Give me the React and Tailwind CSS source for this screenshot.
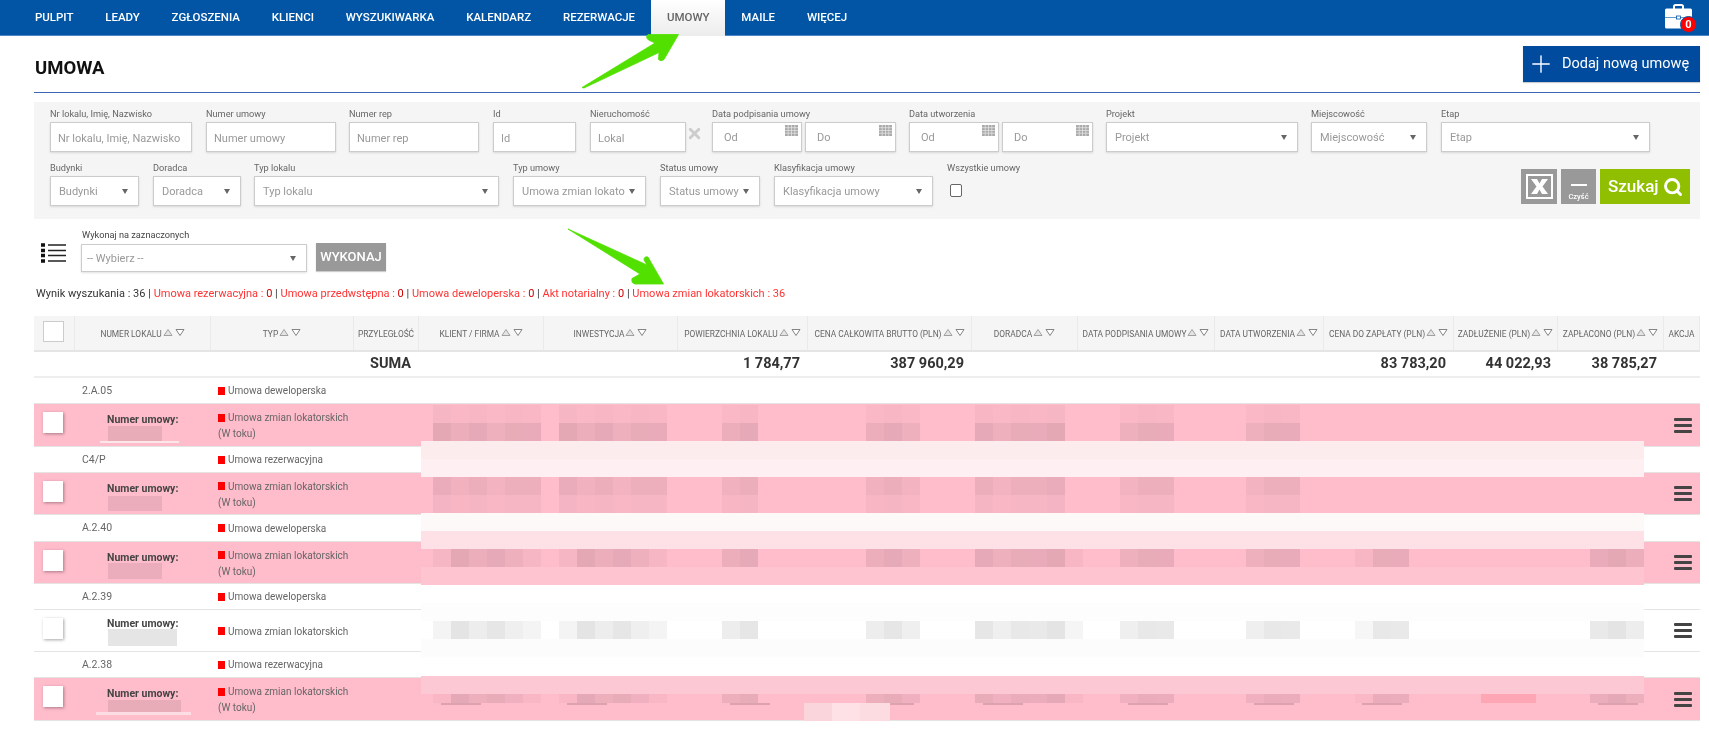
import React from "react";
import { Search, Plus, X } from "lucide-react";

const NAV = ["PULPIT", "LEADY", "ZGŁOSZENIA", "KLIENCI", "WYSZUKIWARKA", "KALENDARZ", "REZERWACJE", "UMOWY", "MAILE", "WIĘCEJ"];
const GRID = "grid grid-cols-[41px_136px_143px_65px_125px_134px_130px_164px_106px_137px_109px_130px_104px_106px_36px]";

function Label({ children }) {
  return <div className="h-[14px] text-[9.2px] leading-[12px] text-[#666] whitespace-nowrap">{children}</div>;
}
const box = "h-[30px] border border-[#ccc] bg-white shadow-[0_1px_2px_rgba(0,0,0,0.12)] text-[11px] text-[#999]";

function TextField({ label, w, cls = "" }) {
  return (
    <div className={w + " shrink-0 " + cls}>
      <Label>{label}</Label>
      <input placeholder={label} className={box + " w-full px-[7px] pt-[2px] outline-none placeholder:text-[#999]"} />
    </div>
  );
}
function Sel({ text, cls = "" }) {
  return (
    <div className={box + " flex items-center pl-[8px] pr-[10px] " + cls}>
      <span className="flex-1 pt-[2px] whitespace-nowrap">{text}</span>
      <span className="ml-[2px] shrink-0 w-0 h-0 border-x-[3.5px] border-x-transparent border-t-[5px] border-t-[#666]" />
    </div>
  );
}
function SelField({ label, text, w, cls = "" }) {
  return (
    <div className={w + " shrink-0 " + cls}>
      <Label>{label}</Label>
      <Sel text={text ?? label} />
    </div>
  );
}
function Cal() {
  return (
    <svg width="13" height="11" viewBox="0 0 13 11" className="absolute right-[3px] top-[2px]">
      <rect width="13" height="11" fill="#aaa" />
      <path d="M3.2 0v11M6.5 0v11M9.8 0v11M0 2.7h13M0 5.5h13M0 8.2h13" stroke="#e8e8e8" strokeWidth="0.7" />
    </svg>
  );
}
function DateBox({ text, w }) {
  return (
    <div className={box + " relative flex items-center pl-[11px] pt-[2px] bg-[#fafafa] " + w}>
      {text}
      <Cal />
    </div>
  );
}
function DateField({ label, cls = "" }) {
  return (
    <div className={"shrink-0 " + cls}>
      <Label>{label}</Label>
      <div className="flex gap-[3px]">
        <DateBox text="Od" w="w-[90px]" />
        <DateBox text="Do" w="w-[91px]" />
      </div>
    </div>
  );
}

function Sort() {
  return (
    <svg width="22" height="9" viewBox="0 0 22 9" className="shrink-0 -mt-[4px] ml-[1px]">
      <path d="M1 7.5 5 1.5 9 7.5Z" fill="#e4e4e4" stroke="#999" strokeWidth="0.9" />
      <path d="M13 1.5h8L17 7.5Z" fill="#fff" stroke="#777" strokeWidth="0.9" />
    </svg>
  );
}
const HEAD = [
  ["NUMER LOKALU", 1], ["TYP", 1], ["PRZYLEGŁOŚĆ", 0], ["KLIENT / FIRMA", 1], ["INWESTYCJA", 1], ["POWIERZCHNIA LOKALU", 1],
  ["CENA CAŁKOWITA BRUTTO (PLN)", 1], ["DORADCA", 1], ["DATA PODPISANIA UMOWY", 1], ["DATA UTWORZENIA", 1],
  ["CENA DO ZAPŁATY (PLN)", 1], ["ZADŁUŻENIE (PLN)", 1], ["ZAPŁACONO (PLN)", 1], ["AKCJA", 0],
];

function Check({ cls = "" }) {
  return <div className={"w-[20px] h-[21px] bg-white shadow-[1px_1px_3px_rgba(0,0,0,0.35)] " + cls} />;
}
function TypeLine({ children }) {
  return (
    <div className="flex items-center text-[10px] leading-[15px] text-[#666] whitespace-nowrap">
      <span className="w-[7px] h-[8px] bg-[#f00] mr-[3px]" />
      {children}
    </div>
  );
}
function ShortRow({ nr, type, h = "h-[26px]" }) {
  return (
    <div className={GRID + " items-center border-b border-[#e4e4e4] bg-white " + h}>
      <div />
      <div className="pl-[7px] text-[10.5px] text-[#666]">{nr}</div>
      <div className="pl-[7px]"><TypeLine>{type}</TypeLine></div>
    </div>
  );
}
function Burger() {
  return (
    <div className="ml-[10px] w-[18px] flex flex-col gap-[3px]">
      <span className="h-[3px] rounded-[1px] bg-[#444]" />
      <span className="h-[3px] rounded-[1px] bg-[#444]" />
      <span className="h-[3px] rounded-[1px] bg-[#444]" />
    </div>
  );
}
function LongRow({ pink = true, h = "h-[42px]", status = true }) {
  return (
    <div className={GRID + " items-center border-b border-[#e4e4e4] relative " + h + " " + (pink ? "bg-[#ffbccb]" : "bg-white")}>
      <div className="pl-[9px] pb-[5px]"><Check /></div>
      <div className={"pl-[32px] text-[10.5px] font-bold text-[#444] whitespace-nowrap self-start " + (status ? "pt-[8px]" : "pt-[6px]")}>Numer umowy:</div>
      <div className="pl-[7px] pt-[1px] flex flex-col gap-[1px]">
        <TypeLine>Umowa zmian lokatorskich</TypeLine>
        {status && <div className="text-[10px] leading-[15px] text-[#666]">(W toku)</div>}
      </div>
      <div className="col-start-15"><Burger /></div>
    </div>
  );
}

const XS = [433, 559, 722, 866, 975, 1120, 1246, 1354, 1590];
const SHORT = [[433, 6], [559, 6], [722, 2], [866, 3], [975, 5], [1120, 3], [1246, 3]];
const DARK = [[451, 4], [577, 4], [722, 2], [866, 3], [975, 5], [1120, 3], [1246, 3], [1373, 2], [1590, 3]];
const FAINT = [[433, 1], [523, 1], [559, 1], [649, 1], [1065, 1], [1355, 1]];
const CELLS = [
  { y: 405, h: 18, a: 0.025, xs: SHORT },
  { y: 423, h: 18, a: 0.085, xs: SHORT },
  { y: 477, h: 18, a: 0.065, xs: SHORT },
  { y: 495, h: 18, a: 0.03, xs: SHORT },
  { y: 549, h: 18, a: 0.085, xs: DARK },
  { y: 549, h: 18, a: 0.025, xs: FAINT },
  { y: 621, h: 18, a: 0.085, xs: DARK },
  { y: 621, h: 18, a: 0.035, xs: FAINT },
  { y: 694, h: 9, a: 0.08, xs: DARK },
  { y: 694, h: 9, a: 0.02, xs: FAINT },
];
const SHADE = [1, 1.25, 0.85, 1.15, 0.75, 1.05];
const BANDS = [
  [441, 18, "#fcecee"], [459, 18, "#fdeff2"], [513, 18, "#fdf9f8"], [531, 18, "#fee1e6"], [567, 18, "#fec4d0"],
  [585, 18, "#ffffff"], [603, 18, "#fdfdfd"], [621, 18, "#ffffff"], [639, 18, "#fcfcfc"], [657, 19, "#ffffff"], [676, 18, "#fcc8d3"],
];
const LEFT = [
  [108, 426, 54, 15, 0.09], [108, 496, 54, 15, 0.08], [108, 563, 54, 16, 0.08], [108, 629, 69, 17, 0.1], [108, 700, 73, 12, 0.09],
];

function Overlay() {
  return (
    <div className="absolute inset-0 pointer-events-none">
      {BANDS.map(([y, h, c]) => (
        <div key={y} className="absolute left-[421px] w-[1223px]" style={{ top: y, height: h, background: c }} />
      ))}
      {CELLS.flatMap((r) =>
        r.xs.flatMap(([x, n]) =>
          Array.from({ length: n }, (_, i) => (
            <div
              key={r.y + "-" + x + "-" + i + "-" + r.a}
              className="absolute w-[18px]"
              style={{ left: x + i * 18, top: r.y, height: r.h, background: `rgba(0,0,0,${r.a * SHADE[(x + i) % 6]})` }}
            />
          ))
        )
      )}
      <div className="absolute left-[1481px] top-[694px] w-[55px] h-[9px] bg-[#ffa6b4]" />
      {XS.map((x) => (
        <div key={x} className="absolute top-[703px] h-[2px] w-[40px] bg-[#8a6a72]/30" style={{ left: x + 8 }} />
      ))}
      {LEFT.map(([x, y, w, h, a]) => (
        <div key={y} className="absolute" style={{ left: x, top: y, width: w, height: h, background: `rgba(0,0,0,${a})` }} />
      ))}
      <div className="absolute left-[100px] top-[441px] w-[79px] h-[2px] bg-[#fbe6ea]" />
      <div className="absolute left-[96px] top-[712px] w-[95px] h-[3px] bg-[#fbdde3]" />
      <div className="absolute left-[804px] top-[703px] w-[28px] h-[18px] bg-[#fbd5dc]" />
      <div className="absolute left-[832px] top-[703px] w-[28px] h-[18px] bg-[#fde1e6]" />
      <div className="absolute left-[860px] top-[703px] w-[30px] h-[18px] bg-[#fcdbe1]" />
      <svg className="absolute left-0 top-0" width="1709" height="729">
        <path d="M582 87.5 655 43 648.5 40Q645 37 648 34.5L678.5 34.5 664 59.5Q661 62 658.5 59.5L659 52.5 584 88Z" fill="#52e000" stroke="#52e000" strokeWidth="0.8" strokeLinejoin="round" />
        <path d="M568 229 647 265 644 260Q644 256 648 257L663.5 284 635 284Q631 283 632 278.5L640 274Z" fill="#52e000" stroke="#52e000" strokeWidth="0.8" strokeLinejoin="round" />
      </svg>
    </div>
  );
}

export default function App() {
  return (
    <div className="relative w-[1709px] h-[729px] overflow-hidden bg-white [font-family:Roboto,sans-serif] blur-[0.4px]">
      {/* nav */}
      <nav className="relative h-[36px] bg-[#0255a5] border-b border-[#4f86c6] flex items-stretch pl-[19px]">
        {NAV.map((n) => (
          <a
            key={n}
            className={
              "px-[15.9px] flex items-center text-[11.5px] font-medium " +
              (n === "UMOWY" ? "bg-gradient-to-b from-white to-[#ececec] text-[#666] h-[36px]" : "text-white")
            }
          >
            {n}
          </a>
        ))}
        <div className="absolute right-[17px] top-[4px] w-[27px] h-[25px]">
          <svg width="27" height="25" viewBox="0 0 27 25">
            <path d="M9 5V2.5Q9 1 10.5 1h6Q18 1 18 2.5V5" fill="none" stroke="#fff" strokeWidth="2" />
            <rect x="0" y="4.5" width="27" height="20" rx="1.5" fill="#fff" />
            <path d="M0 13.5h27" stroke="#0255a5" strokeWidth="0.6" />
            <rect x="11.5" y="12" width="4" height="3" fill="#fff" stroke="#0255a5" strokeWidth="0.8" />
          </svg>
          <span className="absolute left-[15px] top-[12px] w-[17px] h-[17px] rounded-full bg-[#f00] border border-[#0255a5] text-white text-[11px] font-bold flex items-center justify-center leading-none">0</span>
        </div>
      </nav>

      <div className="ml-[34px] mr-[9px]">
        {/* title */}
        <div className="h-[57px] border-b-[1.5px] border-[#3a66b5] flex items-start justify-between">
          <h1 className="mt-[21px] ml-[1px] text-[18.5px] leading-[22px] font-bold text-[#111]">UMOWA</h1>
          <button className="mt-[10px] h-[36px] w-[177px] bg-[#004b9e] text-white flex items-center shadow-[0_1px_1px_rgba(0,0,0,0.2)]">
            <Plus size={28} strokeWidth={1.2} className="ml-[4px]" />
            <span className="ml-[7px] text-[14.5px]">Dodaj nową umowę</span>
          </button>
        </div>

        {/* filters */}
        <div className="mt-[9px] h-[117px] bg-[#f5f5f5] pl-[16px] pt-[6px]">
          <div className="flex h-[45px]">
            <TextField label="Nr lokalu, Imię, Nazwisko" w="w-[142px]" />
            <TextField label="Numer umowy" w="w-[130px]" cls="ml-[14px]" />
            <TextField label="Numer rep" w="w-[130px]" cls="ml-[13px]" />
            <TextField label="Id" w="w-[83px]" cls="ml-[14px]" />
            <div className="w-[96px] shrink-0 ml-[14px]">
              <Label>Nieruchomość</Label>
              <input placeholder="Lokal" className={box + " w-full px-[7px] pt-[2px] outline-none placeholder:text-[#999]"} />
            </div>
            <div className="w-[26px] shrink-0 pt-[17px]">
              <X size={17} strokeWidth={4} className="text-[#ccc]" />
            </div>
            <DateField label="Data podpisania umowy" />
            <DateField label="Data utworzenia" cls="ml-[13px]" />
            <SelField label="Projekt" w="w-[192px]" cls="ml-[13px]" />
            <SelField label="Miejscowość" w="w-[116px]" cls="ml-[13px]" />
            <SelField label="Etap" w="w-[209px]" cls="ml-[14px]" />
          </div>
          <div className="flex mt-[9px]">
            <SelField label="Budynki" w="w-[89px]" />
            <SelField label="Doradca" w="w-[88px]" cls="ml-[14px]" />
            <SelField label="Typ lokalu" w="w-[245px]" cls="ml-[13px]" />
            <SelField label="Typ umowy" text="Umowa zmian lokato" w="w-[133px]" cls="ml-[14px]" />
            <SelField label="Status umowy" w="w-[100px]" cls="ml-[14px]" />
            <SelField label="Klasyfikacja umowy" w="w-[159px]" cls="ml-[14px]" />
            <div className="ml-[14px] shrink-0">
              <Label>Wszystkie umowy</Label>
              <div className="ml-[3px] mt-[8px] w-[12px] h-[13px] rounded-[2px] border border-[#666] bg-white" />
            </div>
            <div className="ml-auto mr-[10px] mt-[7px] flex gap-[4px] h-[35px]">
              <button className="w-[36px] bg-[#999] flex items-center justify-center">
                <svg width="27" height="25" viewBox="0 0 27 25">
                  <rect x="1" y="1" width="25" height="23" fill="none" stroke="#fff" strokeWidth="2" />
                  <path d="M5 5h6l2.5 4.5L16 5h6l-5.5 7.5L22 20h-6l-2.5-4.5L11 20H5l5.5-7.5Z" fill="#fff" />
                </svg>
              </button>
              <button className="w-[35px] bg-[#999] flex flex-col items-center text-white">
                <span className="mt-[15px] w-[16px] h-[1.5px] bg-white" />
                <span className="mt-[6px] text-[7.5px] leading-[9px] font-medium">Czyść</span>
              </button>
              <button className="w-[90px] bg-[#8fbf00] text-white flex items-center pl-[8px]">
                <span className="text-[17px] font-medium">Szukaj</span>
                <Search size={20} strokeWidth={3.5} className="ml-[4px]" />
              </button>
            </div>
          </div>
        </div>

        {/* bulk action */}
        <div className="mt-[9px] pl-[7px] flex items-start h-[44px]">
          <svg width="25" height="20" viewBox="0 0 25 20" className="mt-[15px] shrink-0">
            <path d="M0 2h4M0 7.5h4M0 12.5h4M0 18h4" stroke="#111" strokeWidth="3.5" />
            <path d="M7 2h18M7 7.5h18M7 12.5h18M7 18h18" stroke="#222" strokeWidth="1.6" />
          </svg>
          <div className="ml-[15px]">
            <div className="h-[14px] mb-[2px] pl-[1px] text-[9.2px] leading-[14px] text-[#444]">Wykonaj na zaznaczonych</div>
            <Sel text="-- Wybierz --" cls="w-[226px] !h-[28px] !pl-[5px]" />
          </div>
          <button className="ml-[9px] mt-[15px] w-[70px] h-[28px] bg-[#999] text-white text-[13px] font-medium shadow-[0_1px_1px_rgba(0,0,0,0.2)]">WYKONAJ</button>
        </div>

        {/* results */}
        <div className="mt-[14px] ml-[2px] h-[16px] text-[11px] leading-[16px] text-[#333] whitespace-nowrap">
          Wynik wyszukania : 36 |{" "}
          <span className="text-[#f33]">Umowa rezerwacyjna : </span><span className="text-[#c00]">0</span> |{" "}
          <span className="text-[#f33]">Umowa przedwstępna : </span><span className="text-[#c00]">0</span> |{" "}
          <span className="text-[#f33]">Umowa deweloperska : </span><span className="text-[#c00]">0</span> |{" "}
          <span className="text-[#f33]">Akt notarialny : </span><span className="text-[#c00]">0</span> |{" "}
          <span className="text-[#f33]">Umowa zmian lokatorskich : 36</span>
        </div>

        {/* table */}
        <div className="mt-[14px]">
          <div className={GRID + " h-[36px] bg-[#f5f5f5] border-b-2 border-[#e5e5e5]"}>
            <div className="flex items-center pl-[9px] border-r border-[#eaeaea]">
              <div className="w-[21px] h-[21px] mb-[3px] bg-white border border-[#ccc]" />
            </div>
            {HEAD.map(([t, s]) => (
              <div key={t} className="flex items-center justify-center pt-[3px] border-r border-[#eaeaea] text-[8.4px] text-[#666] whitespace-nowrap">
                {t}
                {s ? <Sort /> : null}
              </div>
            ))}
          </div>
          <div className={GRID + " h-[26px] items-center border-b-2 border-[#eeeeee] text-[14.5px] font-bold text-[#333] leading-none"}>
            <div /><div /><div />
            <div className="pl-[16px] col-span-1">SUMA</div>
            <div /><div />
            <div className="text-right pr-[8px]">1 784,77</div>
            <div className="text-right pr-[8px]">387 960,29</div>
            <div /><div /><div />
            <div className="text-right pr-[8px]">83 783,20</div>
            <div className="text-right pr-[7px]">44 022,93</div>
            <div className="text-right pr-[7px]">38 785,27</div>
          </div>
          <ShortRow nr="2.A.05" type="Umowa deweloperska" />
          <LongRow h="h-[43px]" />
          <ShortRow nr="C4/P" type="Umowa rezerwacyjna" />
          <LongRow />
          <ShortRow nr="A.2.40" type="Umowa deweloperska" h="h-[27px]" />
          <LongRow />
          <ShortRow nr="A.2.39" type="Umowa deweloperska" />
          <LongRow pink={false} status={false} />
          <ShortRow nr="A.2.38" type="Umowa rezerwacyjna" />
          <LongRow h="h-[43px]" />
        </div>
      </div>
      <Overlay />
    </div>
  );
}
